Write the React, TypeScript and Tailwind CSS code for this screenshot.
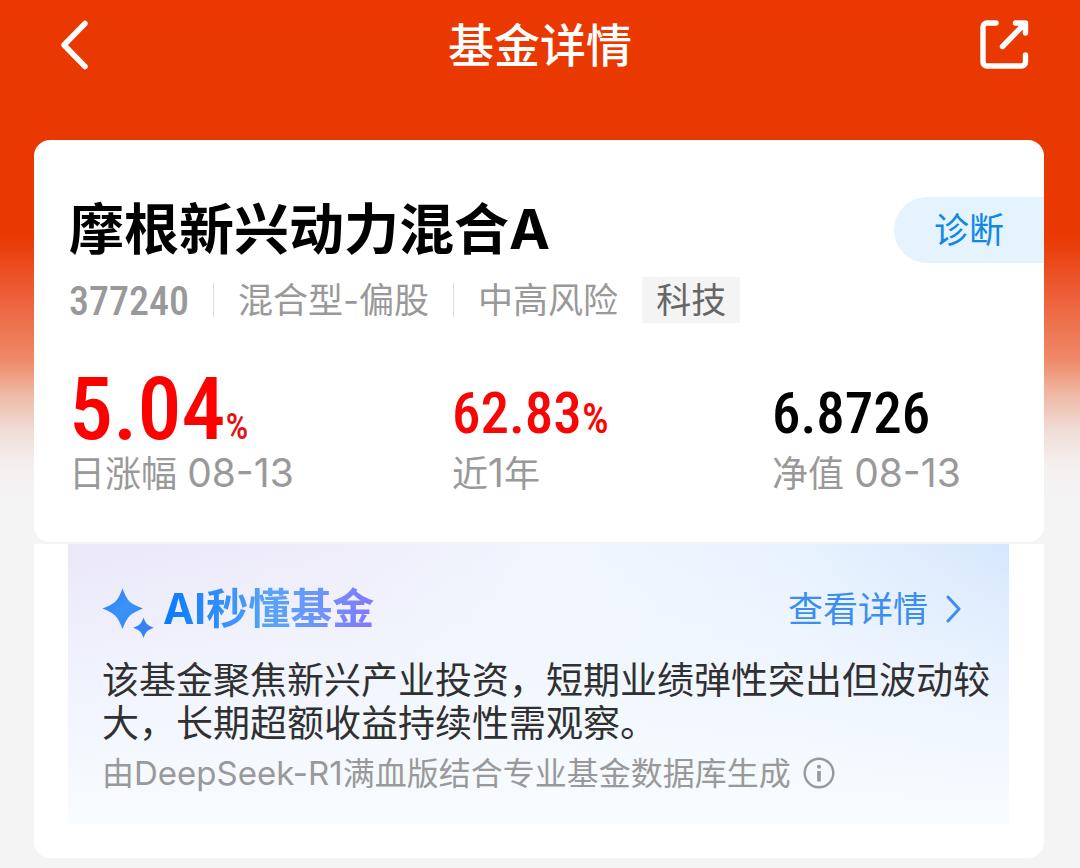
import type { ReactNode } from 'react';

const fund = {
  name: '摩根新兴动力混合A',
  code: '377240',
  type: '混合型-偏股',
  risk: '中高风险',
  theme: '科技',
};

function BackIcon() {
  return (
    <svg width="30" height="50" viewBox="0 0 30 50" fill="none" stroke="currentColor" strokeWidth="5.500" strokeLinecap="round" strokeLinejoin="round" aria-hidden="true">
      <path d="M25 3.500L4 25L25 46.500" />
    </svg>
  );
}

function ShareIcon() {
  return (
    <svg width="50" height="50" viewBox="0 0 50 50" fill="none" stroke="currentColor" strokeWidth="5.400" strokeLinecap="round" strokeLinejoin="round" aria-hidden="true">
      <path d="M16 3H7a4 4 0 0 0-4 4V42a4 4 0 0 0 4 4H41.500a4 4 0 0 0 4-4V35" />
      <path d="M35.500 3H45.500V13" />
      <path d="M44 4.500L22.500 26.500" />
      <path d="M37 3L46.500 12.500V3Z" fill="currentColor" stroke="none" />
    </svg>
  );
}

function SparkIcon() {
  return (
    <svg width="52" height="50" viewBox="0 0 52 50" className="mt-2" aria-hidden="true">
      <defs>
        <linearGradient id="spark" x1="0" y1="0" x2="1" y2="1">
          <stop offset="0" stopColor="#2f7df6" />
          <stop offset="0.5" stopColor="#3a92f8" />
          <stop offset="1" stopColor="#3284f8" />
        </linearGradient>
      </defs>
      <path fill="url(#spark)" d="M20.500 0.500C22.500 6 25 11 28 14C31 16.500 36 18.500 41 20.500C36 22.500 31 24.500 28 27.500C25 30.500 22.500 35.500 20.500 41C18.500 35.500 16 30.500 13 27.500C10 24.500 5.500 22.500 0.500 20.500C5.500 18.500 10 16.500 13 14C16 11 18.500 6 20.500 0.500Z" />
      <path fill="#3481f8" d="M41.500 29.500C42.600 32.500 43.600 35 45.500 36.500C47.300 38 49.200 38.800 51.800 39.700C49.200 40.600 47.300 41.400 45.500 43C43.600 44.600 42.600 47 41.500 50C40.400 47 39.400 44.600 37.500 43C35.700 41.400 33.800 40.600 31.200 39.700C33.800 38.800 35.700 38 37.500 36.500C39.400 35 40.400 32.500 41.500 29.500Z" />
    </svg>
  );
}

function InfoIcon() {
  return (
    <svg width="32" height="32" viewBox="0 0 32 32" fill="none" aria-hidden="true">
      <circle cx="16" cy="16" r="14.300" stroke="currentColor" strokeWidth="2.400" />
      <circle cx="16" cy="9.800" r="2" fill="currentColor" />
      <path d="M16 14V24.500" stroke="currentColor" strokeWidth="3.600" />
    </svg>
  );
}

function Divider() {
  return <span className="h-[34px] w-px bg-[#dcdcdc]" />;
}

function Stat({ label, tone, children }: { label: ReactNode; tone: string; children: ReactNode }) {
  return (
    <div className="flex flex-col">
      <dd className={`order-1 flex h-[84px] items-baseline whitespace-nowrap font-['Roboto_Condensed',Roboto,sans-serif] font-medium ${tone}`}>
        {children}
      </dd>
      <dt className="order-2 h-[40px] whitespace-nowrap text-[36px] leading-[40px] text-[#999999]">{label}</dt>
    </div>
  );
}

export default function App() {
  return (
    <div className="min-h-screen bg-[#f4f4f4] bg-[linear-gradient(180deg,#ea3800_0px,#e93802_235px,#ec5b34_290px,#ef8a69_360px,#efb9a6_395px,#f0dcd6_430px,#f4f0ef_465px,#f4f4f4_500px)] pb-2 font-[Inter,'Noto_Sans_CJK_SC',sans-serif]">
      <header className="flex h-[90px] items-center justify-between px-[50px] text-white">
        <button type="button" aria-label="返回" className="w-[50px] pl-[10px]">
          <BackIcon />
        </button>
        <h1 className="text-[46px] leading-[56px] font-medium">基金详情</h1>
        <button type="button" aria-label="分享">
          <ShareIcon />
        </button>
      </header>

      <main className="mt-[50px] mr-9 ml-[34px]">
        <section className="rounded-2xl bg-white pt-[57px] pb-[49px] pl-[35px]">
          <div className="flex items-start justify-between">
            <h2 className="text-[55px] leading-[64px] font-bold whitespace-nowrap text-black">{fund.name}</h2>
            <a href="#diagnose" className="flex h-[66px] w-[150px] items-center rounded-l-full bg-[#e5f3ff] pl-10 text-[35px] leading-[40px] text-[#1088e4]">
              诊断
            </a>
          </div>

          <div className="mt-[14px] flex items-center gap-6 text-[35px] leading-[46px] whitespace-nowrap text-[#999999]">
            <span className="pt-[3px] font-['Roboto_Condensed',Roboto,sans-serif] text-[40px] leading-[43px] font-medium">{fund.code}</span>
            <Divider />
            <span>{fund.type}</span>
            <Divider />
            <span>{fund.risk}</span>
            <span className="bg-[#f4f4f4] px-[14px] text-[#666666]">{fund.theme}</span>
          </div>

          <dl className="mt-[46px] mr-[35px] grid grid-cols-[383fr_320fr_237fr]">
            <Stat label={<>日涨幅 <span className="text-[39px]">08-13</span></>} tone="text-[#ff0000]">
              <span className="text-[88px] leading-[80px]">5.04</span>
              <span className="text-[36px] leading-[40px] text-[#e01414]">%</span>
            </Stat>
            <Stat label={<>近<span className="text-[39px]">1</span>年</>} tone="pt-[15px] text-[#fa0505]">
              <span className="text-[57px] leading-[60px]">62.83</span>
              <span className="text-[42px] leading-[40px]">%</span>
            </Stat>
            <Stat label={<>净值 <span className="text-[39px]">08-13</span></>} tone="pt-[15px] text-black">
              <span className="text-[57px] leading-[60px]">6.8726</span>
            </Stat>
          </dl>
        </section>

        <section className="mt-[2px] rounded-b-2xl bg-white pr-[35px] pb-[34px] pl-[34px]">
          <div className="bg-[linear-gradient(180deg,rgba(246,251,255,0)_0%,rgba(243,248,255,0.7)_50%,#f8fcff_100%),linear-gradient(90deg,#ebe8f8_0%,#efedfa_28%,#f1f6fe_52%,#e8f2fe_78%,#d6e7fd_100%)] pt-10 pr-4 pb-[31px] pl-[34px]">
            <div className="flex h-[50px] items-center justify-between">
              <div className="flex items-center gap-[9px]">
                <SparkIcon />
                <h3 className="bg-[linear-gradient(90deg,#087aff_0%,#2f8dfa_25%,#58a3f8_50%,#6a98fa_70%,#8278fa_100%)] bg-clip-text text-[42px] leading-[50px] font-bold text-transparent">
                  AI秒懂基金
                </h3>
              </div>
              <a href="#details" className="mr-8 flex items-center gap-[18px] text-[35px] leading-[50px] text-[#3c8df0]">
                查看详情
                <svg width="15" height="28" viewBox="0 0 15 28" fill="none" stroke="currentColor" strokeWidth="3" strokeLinecap="round" strokeLinejoin="round" aria-hidden="true">
                  <path d="M2 2L13 14L2 26" />
                </svg>
              </a>
            </div>
            <p className="mt-[25px] text-[37px] leading-[43px] text-[#303030]">
              该基金聚焦新兴产业投资，短期业绩弹性突出但波动较大，长期超额收益持续性需观察。
            </p>
            <div className="mt-2 flex h-[40px] items-center gap-3 text-[32px] leading-[40px] text-[#999999]">
              <p>
                由<span className="text-[33px]">DeepSeek-R1</span>满血版结合专业基金数据库生成
              </p>
              <button type="button" aria-label="说明">
                <InfoIcon />
              </button>
            </div>
          </div>
        </section>
      </main>
    </div>
  );
}
